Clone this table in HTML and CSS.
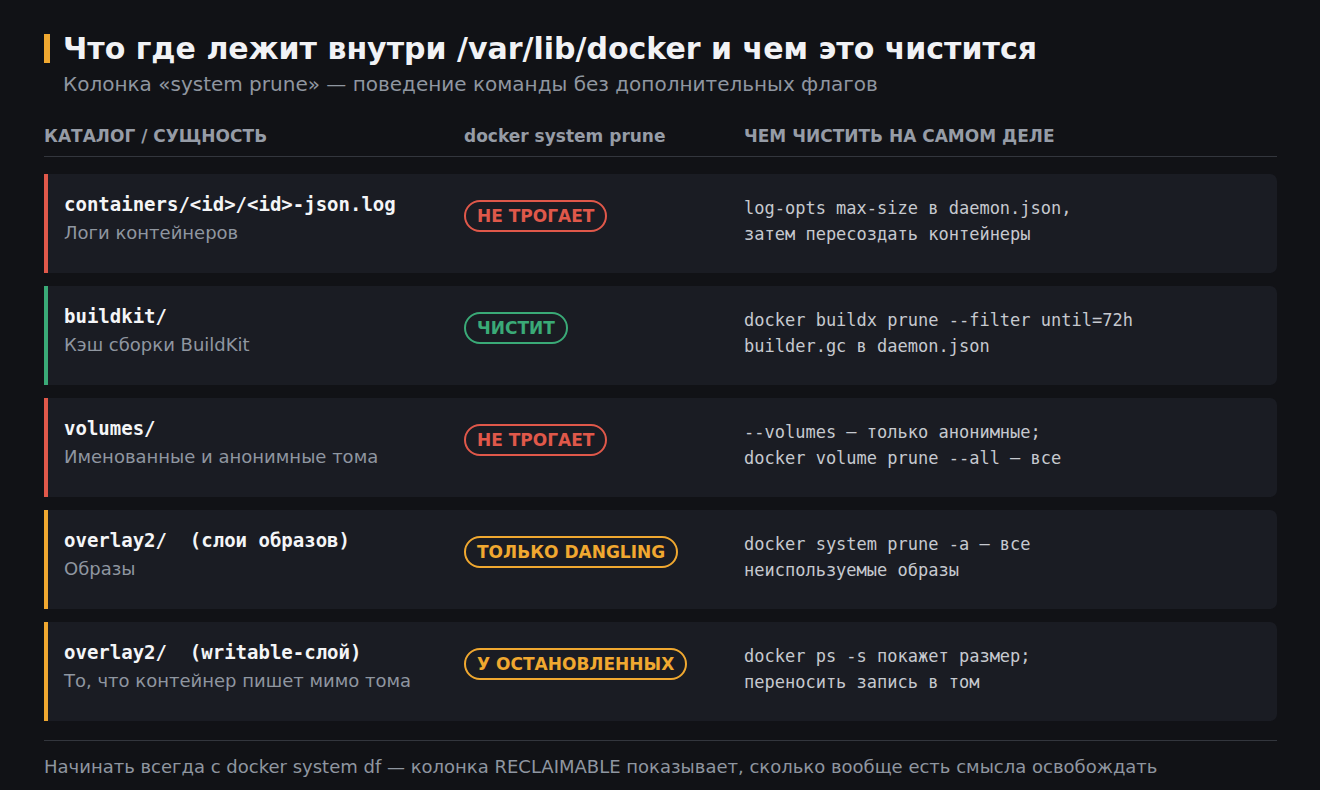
FILE: index.html
```html
<!DOCTYPE html>
<html lang="ru">
<head>
    <meta charset="UTF-8">
    <title>/var/lib/docker</title>
    <link rel="stylesheet" href="styles.css">
</head>
<body>
<div class="page">
    <h1 class="title">Что где лежит внутри /var/lib/docker и чем это чистится</h1>
    <p class="subtitle">Колонка «system prune» — поведение команды без дополнительных флагов</p>

    <div class="table-head">
        <div>КАТАЛОГ / СУЩНОСТЬ</div>
        <div>docker system prune</div>
        <div>ЧЕМ ЧИСТИТЬ НА САМОМ ДЕЛЕ</div>
    </div>

    <div class="rows">
        <div class="row red">
            <div class="entity">
                <div class="path">containers/&lt;id&gt;/&lt;id&gt;-json.log</div>
                <div class="desc">Логи контейнеров</div>
            </div>
            <div><span class="badge">НЕ ТРОГАЕТ</span></div>
            <div class="howto">log-opts max-size в daemon.json,<br>затем пересоздать контейнеры</div>
        </div>
        <div class="row green">
            <div class="entity">
                <div class="path">buildkit/</div>
                <div class="desc">Кэш сборки BuildKit</div>
            </div>
            <div><span class="badge">ЧИСТИТ</span></div>
            <div class="howto">docker buildx prune --filter until=72h<br>builder.gc в daemon.json</div>
        </div>
        <div class="row red">
            <div class="entity">
                <div class="path">volumes/</div>
                <div class="desc">Именованные и анонимные тома</div>
            </div>
            <div><span class="badge">НЕ ТРОГАЕТ</span></div>
            <div class="howto">--volumes — только анонимные;<br>docker volume prune --all — все</div>
        </div>
        <div class="row amber">
            <div class="entity">
                <div class="path">overlay2/  (слои образов)</div>
                <div class="desc">Образы</div>
            </div>
            <div><span class="badge">ТОЛЬКО DANGLING</span></div>
            <div class="howto">docker system prune -a — все<br>неиспользуемые образы</div>
        </div>
        <div class="row amber">
            <div class="entity">
                <div class="path">overlay2/  (writable-слой)</div>
                <div class="desc">То, что контейнер пишет мимо тома</div>
            </div>
            <div><span class="badge">У ОСТАНОВЛЕННЫХ</span></div>
            <div class="howto">docker ps -s покажет размер;<br>переносить запись в том</div>
        </div>
    </div>

    <div class="footer">Начинать всегда с docker system df — колонка RECLAIMABLE показывает, сколько вообще есть смысла освобождать</div>
</div>
</body>
</html>
```

FILE: styles.css
```css
body {
    margin: 0;
    background-color: #111216;
    font-family: "DejaVu Sans", "Noto Sans", sans-serif;
    color: #eceef2;
}

.page {
    padding: 34px 43px 0 44px;
}

.title {
    margin: 0;
    border-left: 6px solid #f0a830;
    padding-left: 13px;
    font-size: 30px;
    line-height: 29px;
    font-weight: bold;
    color: #f1f2f5;
}

.subtitle {
    margin: 8px 0 0 19px;
    font-size: 20px;
    line-height: 26px;
    color: #8f96a0;
}

.table-head {
    display: grid;
    grid-template-columns: 420px 280px 1fr;
    margin-top: 27px;
    padding-bottom: 8px;
    border-bottom: 1px solid #33363d;
    font-size: 17px;
    line-height: 24px;
    font-weight: bold;
    color: #969ca6;
}

.rows {
    display: flex;
    flex-direction: column;
    gap: 13px;
    margin-top: 17px;
}

.row {
    display: grid;
    grid-template-columns: 400px 280px 1fr;
    align-items: start;
    height: 99px;
    box-sizing: border-box;
    padding: 17px 16px 0 16px;
    background-color: #1a1c23;
    border-left: 4px solid;
    border-radius: 0 7px 7px 0;
}

.row.red { border-left-color: #e0584a; }
.row.green { border-left-color: #3aaa77; }
.row.amber { border-left-color: #f0a830; }

.path {
    font-family: "DejaVu Sans Mono", monospace;
    font-weight: bold;
    font-size: 19px;
    line-height: 26px;
    color: #f4f5f7;
    white-space: pre;
}

.desc {
    font-size: 18px;
    line-height: 32px;
    color: #8f96a0;
}

.badge {
    display: inline-block;
    margin-top: 9px;
    padding: 0 11px;
    border: 2px solid;
    border-radius: 16px;
    font-size: 17px;
    line-height: 28px;
    font-weight: bold;
}

.red .badge { color: #e0584a; }
.green .badge { color: #3aaa77; }
.amber .badge { color: #f0a830; }

.howto {
    margin-top: 4px;
    font-family: "DejaVu Sans Mono", monospace;
    font-size: 17px;
    line-height: 26px;
    color: #c6c9cf;
}

.footer {
    margin-top: 19px;
    padding-top: 13px;
    border-top: 1px solid #33363d;
    font-size: 18px;
    line-height: 26px;
    color: #8f96a0;
}
```
